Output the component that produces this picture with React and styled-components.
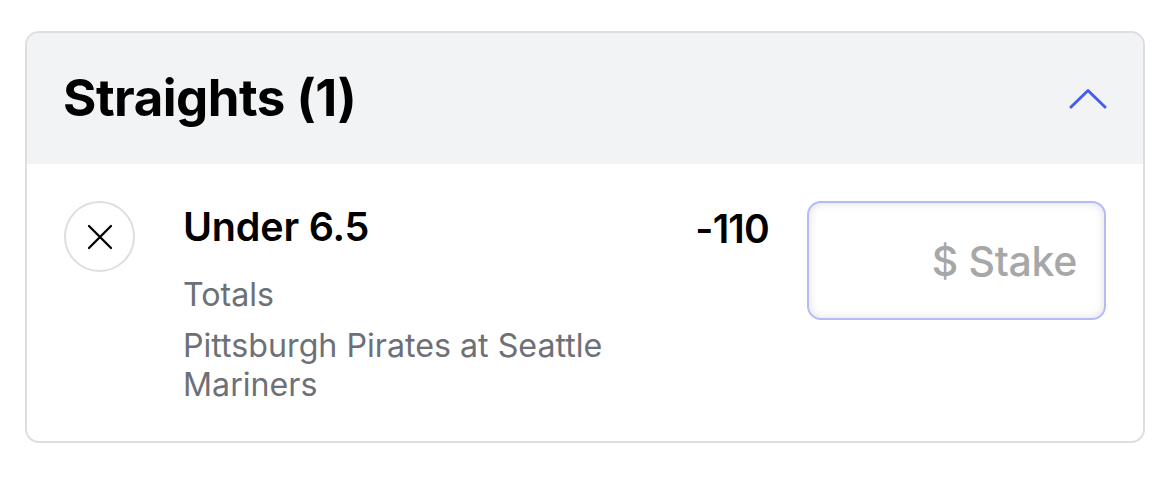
import React from 'react'
import styled, { createGlobalStyle } from 'styled-components'

const GlobalStyle = createGlobalStyle`
  body {
    margin: 0;
    background: #fff;
    font-family: Inter, "Liberation Sans", sans-serif;
  }
`

const Page = styled.div`
  padding: 31px 25px 0 25px;
`

const Card = styled.section`
  border: 2px solid #dcdee2;
  border-radius: 14px;
  overflow: hidden;
  width: 1120px;
  box-sizing: border-box;
`

const Header = styled.header`
  background: #f2f3f5;
  height: 131px;
  display: flex;
  align-items: center;
  justify-content: space-between;
  padding: 0 36px 0 36px;
`

const Title = styled.h2`
  margin: 0;
  font-size: 51px;
  font-weight: 700;
  letter-spacing: -0.5px;
  color: #000;
  padding-bottom: 2px;
`

const Toggle = styled.button`
  background: none;
  border: none;
  padding: 0;
  width: 38px;
  height: 22px;
  cursor: pointer;
  display: flex;
`

const Row = styled.div`
  display: flex;
  align-items: flex-start;
  padding: 37px 37px 37px 37px;
`

const Remove = styled.button`
  flex: none;
  width: 71px;
  height: 71px;
  border-radius: 50%;
  border: 2px solid #dcdee2;
  background: #fff;
  display: flex;
  align-items: center;
  justify-content: center;
  padding: 0;
  cursor: pointer;
`

const Details = styled.div`
  flex: 1;
  margin-left: 48px;
  display: flex;
  flex-direction: column;
`

const Selection = styled.div`
  font-size: 39.5px;
  font-weight: 600;
  color: #000;
  line-height: 44px;
  margin-top: 4px;
  letter-spacing: -0.2px;
`

const Meta = styled.div`
  font-size: 32.2px;
  color: #6d7077;
  line-height: 39px;
  margin-top: ${p => p.$gap || 0}px;
  max-width: 470px;
`

const Odds = styled.div`
  font-size: 39px;
  font-weight: 600;
  color: #000;
  line-height: 44px;
  margin: 6px 38px 0 0;
  letter-spacing: -0.8px;
`

const Stake = styled.input`
  flex: none;
  width: 299px;
  height: 119px;
  box-sizing: border-box;
  border: 2px solid #b4bcf7;
  border-radius: 14px;
  background: #fff;
  box-shadow: inset 0 0 10px rgba(0, 0, 0, 0.13);
  text-align: right;
  padding: 0 27px 0 12px;
  font-family: Inter, "Liberation Sans", sans-serif;
  font-size: 41px;
  font-weight: 500;
  letter-spacing: -0.3px;
  outline: none;
  &::placeholder {
    color: #a7a7a7;
  }
`

const App = () => (
  <Page>
    <GlobalStyle />
    <Card>
      <Header>
        <Title>Straights (1)</Title>
        <Toggle aria-label="Collapse">
          <svg width="38" height="22" viewBox="0 0 38 22" fill="none">
            <path
              d="M2 19 L19 2.5 L36 19"
              stroke="#4a5cf0"
              strokeWidth="3"
              strokeLinecap="round"
              strokeLinejoin="round"
            />
          </svg>
        </Toggle>
      </Header>
      <Row>
        <Remove aria-label="Remove">
          <svg width="26" height="26" viewBox="0 0 26 26" fill="none">
            <path
              d="M2 2 L24 24 M24 2 L2 24"
              stroke="#000"
              strokeWidth="2.3"
              strokeLinecap="round"
            />
          </svg>
        </Remove>
        <Details>
          <Selection>Under 6.5</Selection>
          <Meta $gap={26}>Totals</Meta>
          <Meta $gap={12}>Pittsburgh Pirates at Seattle Mariners</Meta>
        </Details>
        <Odds>-110</Odds>
        <Stake placeholder="$ Stake" />
      </Row>
    </Card>
  </Page>
)

export default App
